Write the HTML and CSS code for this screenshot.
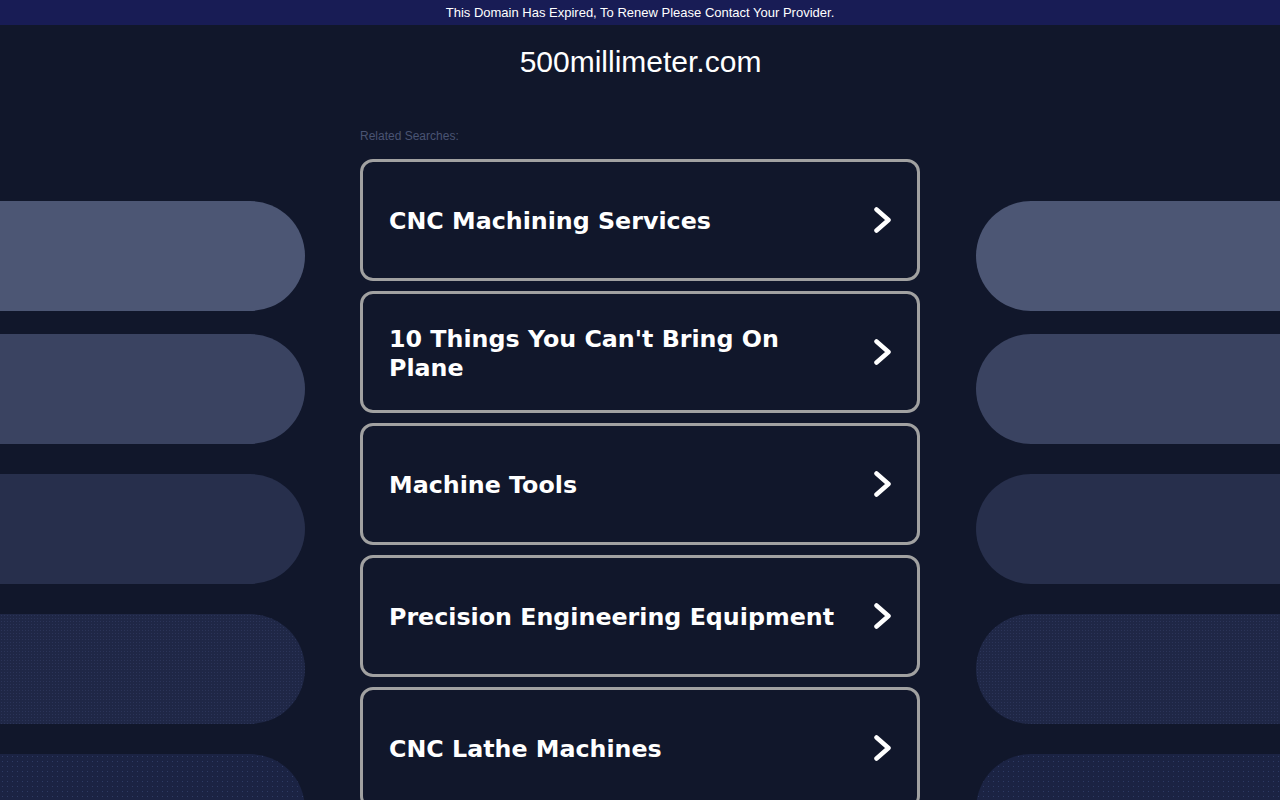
FILE: index.html
```html
<!DOCTYPE html>
<html lang="en">
<head>
    <meta charset="UTF-8">
    <meta name="viewport" content="width=device-width, initial-scale=1.0">
    <title>500millimeter.com</title>
    <link rel="stylesheet" href="styles.css">
</head>
<body>
    <div class="banner">This Domain Has Expired, To Renew Please Contact Your Provider.</div>

    <div class="page">
        <div class="decor decor-left">
            <div class="pill pill-1"></div>
            <div class="pill pill-2"></div>
            <div class="pill pill-3"></div>
            <div class="pill pill-4"></div>
            <div class="pill pill-5"></div>
        </div>

        <main class="main">
            <h1 class="domain">500millimeter.com</h1>
            <p class="related-label">Related Searches:</p>

            <div class="results">
                <a class="result" href="#">
                    <span class="result-text">CNC Machining Services</span>
                    <svg class="chevron" viewBox="0 0 17 26"><path d="M2.5 2.5 L14.5 13 L2.5 23.5"/></svg>
                </a>
                <a class="result" href="#">
                    <span class="result-text">10 Things You Can't Bring On Plane</span>
                    <svg class="chevron" viewBox="0 0 17 26"><path d="M2.5 2.5 L14.5 13 L2.5 23.5"/></svg>
                </a>
                <a class="result" href="#">
                    <span class="result-text">Machine Tools</span>
                    <svg class="chevron" viewBox="0 0 17 26"><path d="M2.5 2.5 L14.5 13 L2.5 23.5"/></svg>
                </a>
                <a class="result" href="#">
                    <span class="result-text">Precision Engineering Equipment</span>
                    <svg class="chevron" viewBox="0 0 17 26"><path d="M2.5 2.5 L14.5 13 L2.5 23.5"/></svg>
                </a>
                <a class="result" href="#">
                    <span class="result-text">CNC Lathe Machines</span>
                    <svg class="chevron" viewBox="0 0 17 26"><path d="M2.5 2.5 L14.5 13 L2.5 23.5"/></svg>
                </a>
            </div>
        </main>

        <div class="decor decor-right">
            <div class="pill pill-1"></div>
            <div class="pill pill-2"></div>
            <div class="pill pill-3"></div>
            <div class="pill pill-4"></div>
            <div class="pill pill-5"></div>
        </div>
    </div>
</body>
</html>
```

FILE: styles.css
```css
* {
    margin: 0;
    padding: 0;
    box-sizing: border-box;
}

:root {
    --bg: #11172b;
    --banner-bg: #181c55;
    --text-color: #ffffff;
    --muted: #4a5473;
    --card-border: #a1a1a1;
}

html,
body {
    height: 100%;
    overflow: hidden;
}

body {
    background: var(--bg);
    color: var(--text-color);
    font-family: 'Liberation Sans', Arial, sans-serif;
}

.banner {
    height: 25px;
    background: var(--banner-bg);
    font-size: 13px;
    line-height: 25px;
    text-align: center;
}

.page {
    display: grid;
    grid-template-columns: 305px 671px 1fr;
}

/* background pills on both sides */
.decor {
    display: flex;
    flex-direction: column;
    padding-top: 176px;
}

.pill {
    height: 110px;
    flex-shrink: 0;
}

.pill + .pill {
    margin-top: 30px;
}

.pill.pill-2 {
    margin-top: 23px;
}

.decor-left .pill {
    border-radius: 0 55px 55px 0;
}

.decor-right .pill {
    border-radius: 55px 0 0 55px;
}

.pill-1 {
    background: #4c5674;
}

.pill-2 {
    background: #3a4361;
}

.pill-3 {
    background: #272f4c;
}

.pill-4 {
    background-color: #1f2746;
    background-image: radial-gradient(rgba(70, 85, 130, 0.3) 0.6px, transparent 0.9px);
    background-size: 3px 3px;
}

.pill-5 {
    background-color: #1b2343;
    background-image: radial-gradient(rgba(70, 90, 140, 0.45) 0.7px, transparent 1px);
    background-size: 5px 5px;
}

.main {
    display: flex;
    flex-direction: column;
    align-items: center;
}

.domain {
    margin-top: 19px;
    font-size: 30px;
    line-height: 36px;
    font-weight: 400;
    text-align: center;
}

.related-label {
    align-self: flex-start;
    width: 560px;
    margin: 49px 0 0 55px;
    font-size: 12px;
    line-height: 14px;
    color: var(--muted);
}

.results {
    align-self: flex-start;
    width: 560px;
    margin: 16px 0 0 55px;
    display: flex;
    flex-direction: column;
    gap: 10px;
}

.result {
    height: 122px;
    flex-shrink: 0;
    display: flex;
    align-items: center;
    gap: 20px;
    padding: 0 26px;
    border: 3px solid var(--card-border);
    border-radius: 13px;
    color: var(--text-color);
    text-decoration: none;
}

.result-text {
    flex: 1;
    padding-top: 3px;
    font-family: 'DejaVu Sans', Verdana, sans-serif;
    font-size: 23.75px;
    line-height: 29px;
    font-weight: 700;
}

.chevron {
    width: 17px;
    height: 26px;
    flex-shrink: 0;
    fill: none;
    stroke: #ffffff;
    stroke-width: 4.5;
    stroke-linecap: round;
    stroke-linejoin: round;
}
```
